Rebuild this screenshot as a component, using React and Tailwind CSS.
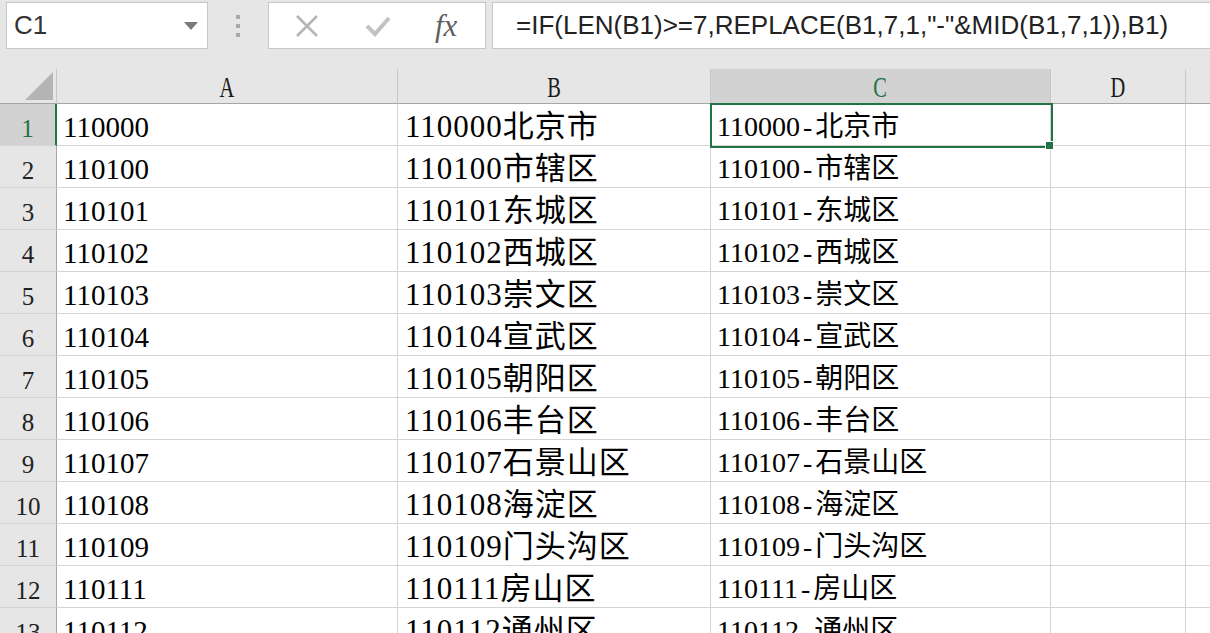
import React from 'react';

const rows = [
  ['110000', '北京市'],
  ['110100', '市辖区'],
  ['110101', '东城区'],
  ['110102', '西城区'],
  ['110103', '崇文区'],
  ['110104', '宣武区'],
  ['110105', '朝阳区'],
  ['110106', '丰台区'],
  ['110107', '石景山区'],
  ['110108', '海淀区'],
  ['110109', '门头沟区'],
  ['110111', '房山区'],
  ['110112', '通州区'],
];

const serif = "font-['Liberation_Serif','Noto_Sans_CJK_SC',serif]";

function ColHead({ label, active }) {
  return (
    <div
      className={`flex h-[35px] items-end justify-center border-r border-b border-r-[#c8c8c8] border-b-[#a6a6a6] pb-[1px] ${
        active ? 'bg-[#d2d2d2] text-[#217346]' : 'bg-[#e6e6e6] text-[#1a1a1a]'
      }`}
    >
      <span className={`inline-block scale-x-[0.68] text-[30px] leading-[30px] ${serif}`}>{label}</span>
    </div>
  );
}

export default function App() {
  return (
    <div className="relative h-[633px] w-[1210px] overflow-hidden bg-white">
      {/* formula bar */}
      <div className="flex h-[69px] items-start bg-[#e6e6e6] pt-[2px]">
        <div className="ml-[6px] flex h-[47px] w-[202px] shrink-0 items-center justify-between border border-[#c6c6c6] bg-white pl-[7px] pr-[9px]">
          <span className="font-['Liberation_Sans',sans-serif] text-[26px] text-[#333]">C1</span>
          <svg width="14" height="8" viewBox="0 0 14 8">
            <path d="M0 0h14L7 8z" fill="#7a7a7a" />
          </svg>
        </div>
        <div className="flex w-[60px] shrink-0 justify-center pt-[13px]">
          <div className="flex flex-col gap-[5px]">
            <span className="h-[4px] w-[4px] bg-[#a8a8a8]" />
            <span className="h-[4px] w-[4px] bg-[#a8a8a8]" />
            <span className="h-[4px] w-[4px] bg-[#a8a8a8]" />
          </div>
        </div>
        <div className="flex h-[47px] w-[218px] shrink-0 items-center border border-[#c6c6c6] bg-white">
          <svg className="ml-[26px]" width="24" height="22" viewBox="0 0 24 22">
            <path d="M2 1l20 20M22 1L2 21" stroke="#b5b5b5" strokeWidth="2.5" fill="none" />
          </svg>
          <svg className="ml-[46px]" width="26" height="22" viewBox="0 0 26 22">
            <path d="M2 11l8 8L24 3" stroke="#c2c2c2" strokeWidth="4" fill="none" />
          </svg>
          <span className="ml-[44px] font-['Liberation_Serif',serif] text-[31px] italic leading-none text-[#5f5f5f]">fx</span>
        </div>
        <div className="ml-[6px] flex h-[47px] w-[740px] shrink-0 items-center border border-[#c6c6c6] bg-white pl-[23px]">
          <span className="whitespace-nowrap font-['Liberation_Sans',sans-serif] text-[26px] text-[#222]">
            =IF(LEN(B1)&gt;=7,REPLACE(B1,7,1,"-"&amp;MID(B1,7,1)),B1)
          </span>
        </div>
      </div>

      {/* sheet */}
      <div className="grid grid-cols-[57px_341px_313px_340px_135px_1fr]">
        <div className="relative h-[35px] border-r border-b border-r-[#c8c8c8] border-b-[#a6a6a6] bg-[#e6e6e6]">
          <svg className="absolute right-[3px] bottom-[3px]" width="28" height="28" viewBox="0 0 28 28">
            <path d="M28 0V28H0z" fill="#b4b4b4" />
          </svg>
        </div>
        <ColHead label="A" />
        <ColHead label="B" />
        <ColHead label="C" active />
        <ColHead label="D" />
        <div className="h-[35px] border-b border-b-[#a6a6a6] bg-[#e6e6e6]" />

        {rows.map(([code, name], i) => (
          <React.Fragment key={code}>
            <div
              className={`flex h-[42px] items-end justify-center border-b border-b-[#d4d4d4] pb-[1px] ${
                i === 0
                  ? 'border-r-2 border-r-[#217346] bg-[#d2d2d2] text-[#217346]'
                  : 'border-r border-r-[#a6a6a6] bg-[#e6e6e6] text-[#222]'
              }`}
            >
              <span className={`text-[25px] leading-[30px] ${serif}`}>{i + 1}</span>
            </div>
            <div className="flex h-[42px] items-end border-r border-b border-[#d4d4d4] pb-[2px] pl-[6px]">
              <span className={`text-[29px] leading-[32px] text-black ${serif}`}>{code}</span>
            </div>
            <div className="flex h-[42px] items-end border-r border-b border-[#d4d4d4] pb-[1px] pl-[7px]">
              <span className={`whitespace-nowrap text-[31px] leading-[34px] tracking-[1px] text-black ${serif}`}>
                {code}
                {name}
              </span>
            </div>
            <div className="flex h-[42px] items-end border-r border-b border-[#d4d4d4] pb-[2px] pl-[6px]">
              <span className={`whitespace-nowrap text-[28px] leading-[32px] text-black ${serif}`}>
                {code}
                <span className="px-[3px]">-</span>
                {name}
              </span>
            </div>
            <div className="h-[42px] border-r border-b border-[#d4d4d4]" />
            <div className="h-[42px] border-b border-[#d4d4d4]" />
          </React.Fragment>
        ))}
      </div>

      {/* selection of C1 */}
      <div className="pointer-events-none absolute left-[710px] top-[103px] h-[45px] w-[343px] border-2 border-[#217346]" />
      <div className="pointer-events-none absolute left-[1045px] top-[141px] h-[9px] w-[9px] border border-white bg-[#217346]" />
    </div>
  );
}
